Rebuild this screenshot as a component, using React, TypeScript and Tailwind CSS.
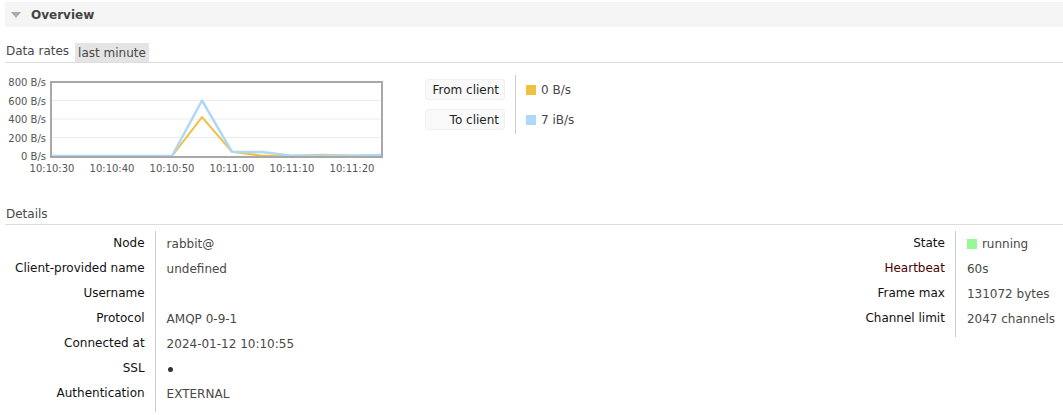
const blue = [
  [51, 0], [172, 0], [202, 600], [232, 45], [262, 42], [292, 4], [322, 3], [352, 4], [381, 12],
];
const orange = [
  [51, 0], [172, 0], [202, 420], [232, 45], [262, 4], [292, 2], [322, 14], [352, 5], [381, 6],
];

const yOf = (v: number) => 156 - (v * 74) / 800;
const toPoints = (pts: number[][]) => pts.map(([x, v]) => `${x},${yOf(v)}`).join(" ");

function RateChart() {
  const ticks = [800, 600, 400, 200, 0];
  const times = ["10:10:30", "10:10:40", "10:10:50", "10:11:00", "10:11:10", "10:11:20"];
  return (
    <svg width="390" height="105" viewBox="0 75 390 105" className="block shrink-0">
      {[600, 400, 200].map((v) => (
        <line key={v} x1="51" x2="381" y1={yOf(v)} y2={yOf(v)} stroke="#ececec" strokeWidth="1" />
      ))}
      <polyline points={toPoints(orange)} fill="none" stroke="#edc240" strokeWidth="2" strokeLinejoin="round" />
      <polyline points={toPoints(blue)} fill="none" stroke="#afd8f8" strokeWidth="2.5" strokeLinejoin="round" />
      <rect x="51" y="82" width="331" height="75" fill="none" stroke="#a8a8a8" strokeWidth="2" />
      {ticks.map((v) => (
        <text key={v} x="46" y={yOf(v) + 4} textAnchor="end" fontSize="10" fill="#555">
          {v} B/s
        </text>
      ))}
      {times.map((t, i) => (
        <text key={t} x={52 + i * 60} y="172" textAnchor="middle" fontSize="10" fill="#555">
          {t}
        </text>
      ))}
    </svg>
  );
}

function Legend() {
  const rows = [
    { label: "From client", color: "bg-[#edc240]", value: "0 B/s" },
    { label: "To client", color: "bg-[#afd8f8]", value: "7 iB/s" },
  ];
  return (
    <div className="flex ml-[35px]">
      <div className="flex flex-col gap-[9px] pr-[10px] py-[4px]">
        {rows.map((r) => (
          <div
            key={r.label}
            className="w-[80px] h-[21px] flex items-center justify-end pr-[5px] bg-[#f9f9f9] border border-[#f0f0f0] rounded-[3px] text-[#222] text-[12px]"
          >
            {r.label}
          </div>
        ))}
      </div>
      <div className="border-l border-[#ccc] flex flex-col gap-[9px] pl-[10px] py-[4px]">
        {rows.map((r) => (
          <div key={r.label} className="h-[21px] flex items-center gap-[5px] text-[#484848] text-[12px]">
            <span className={`w-[10px] h-[10px] ${r.color}`} />
            {r.value}
          </div>
        ))}
      </div>
    </div>
  );
}

type Fact = { label: string; value: React.ReactNode; help?: boolean };

function Facts({ facts }: { facts: Fact[] }) {
  return (
    <table className="border-collapse">
      <tbody>
        {facts.map((f, i) => {
          const last = i === facts.length - 1 ? "pb-[10px]" : "";
          return (
            <tr key={f.label}>
              <th
                className={`text-right font-normal px-[10px] h-[25px] whitespace-nowrap align-top pt-[4px] leading-[16px] ${
                  f.help ? "text-[#4a0000]" : "text-[#111]"
                } ${last}`}
              >
                {f.label}
              </th>
              <td
                className={`border-l border-[#ccc] pl-[11px] pr-[8px] text-[#484848] whitespace-nowrap h-[25px] align-top pt-[5px] leading-[16px] ${last}`}
              >
                {f.value}
              </td>
            </tr>
          );
        })}
      </tbody>
    </table>
  );
}

export default function App() {
  const left: Fact[] = [
    { label: "Node", value: "rabbit@" },
    { label: "Client-provided name", value: "undefined" },
    { label: "Username", value: "" },
    { label: "Protocol", value: "AMQP 0-9-1" },
    { label: "Connected at", value: "2024-01-12 10:10:55" },
    { label: "SSL", value: <span className="inline-block w-[5px] h-[5px] rounded-full bg-[#333] ml-[1px] align-middle" /> },
    { label: "Authentication", value: "EXTERNAL" },
  ];
  const right: Fact[] = [
    {
      label: "State",
      value: (
        <span className="flex items-center gap-[5px]">
          <span className="w-[10px] h-[10px] bg-[#98f898]" />
          running
        </span>
      ),
    },
    { label: "Heartbeat", value: "60s", help: true },
    { label: "Frame max", value: "131072 bytes" },
    { label: "Channel limit", value: "2047 channels" },
  ];

  return (
    <div className="w-[1063px] h-[415px] overflow-hidden bg-white font-['DejaVu_Sans',Verdana,sans-serif] text-[12px] text-[#484848]">
      <div className="ml-[5px] mt-[2px] h-[25px] bg-[#f5f5f5] flex items-center">
        <svg width="10" height="6" viewBox="0 0 10 6" className="ml-[6px]">
          <path d="M0 0H10L5 6Z" fill="#aaa" />
        </svg>
        <span className="ml-[10px] font-bold text-[12px] text-[#444]">Overview</span>
      </div>

      <div className="pl-[5px]">
        <div className="mt-[15px] flex items-end border-b border-[#ddd]">
          <span className="pl-[1px] pb-[2px]">Data rates</span>
          <span className="ml-[6px] bg-[#e4e4e4] px-[3px] h-[19px] flex items-center">last minute</span>
        </div>

        <div className="flex items-start -ml-[5px] mt-[12px]">
          <RateChart />
          <Legend />
        </div>

        <div className="mt-[26px] border-b border-[#ddd] pl-[1px] leading-[16px] pb-[2px]">Details</div>

        <div className="flex items-start justify-between mt-[6px]">
          <Facts facts={left} />
          <Facts facts={right} />
        </div>
      </div>
    </div>
  );
}
